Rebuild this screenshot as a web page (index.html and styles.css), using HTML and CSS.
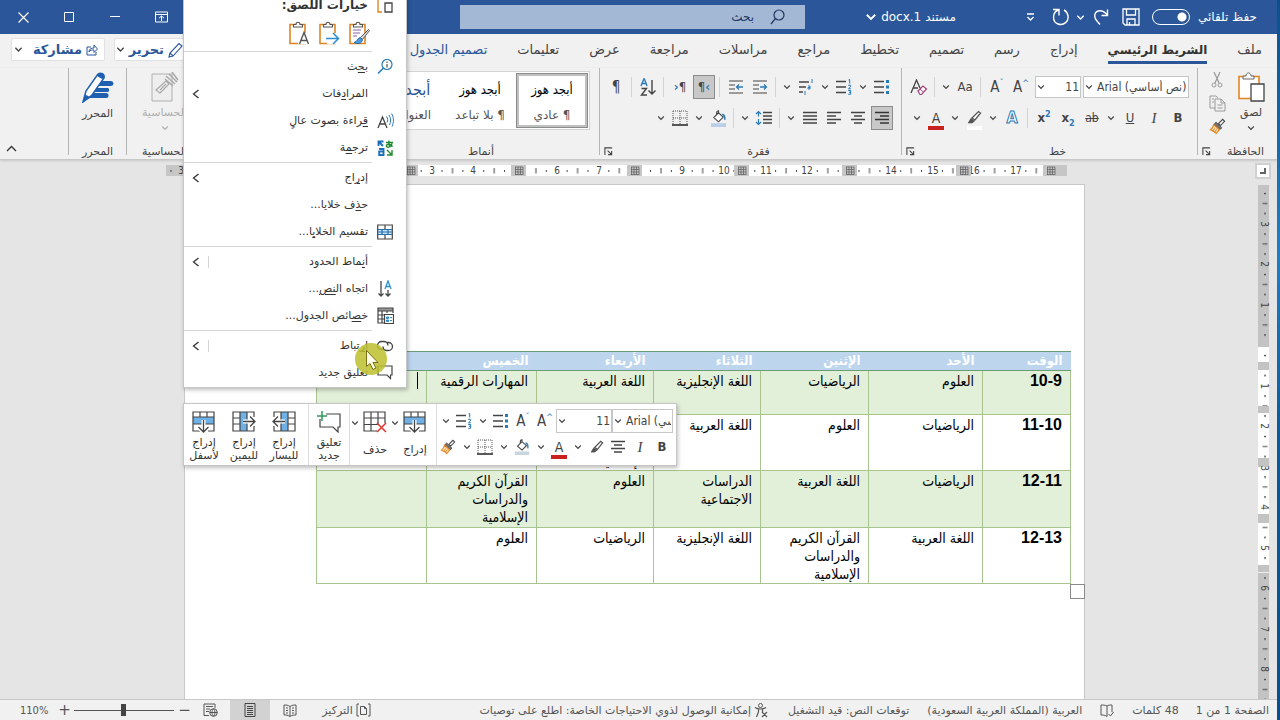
FILE: index.html
```html
<!DOCTYPE html>
<html lang="ar" dir="rtl">
<head>
<meta charset="utf-8">
<title>مستند 1.docx</title>
<link rel="stylesheet" href="styles.css">
</head>
<body>
<svg class="sprite" aria-hidden="true">
  <symbol id="chev" viewBox="0 0 8 8"><path d="M1.200 2.500 4 5.300 6.800 2.500" fill="none" stroke="currentColor" stroke-width="1.200"/></symbol>
  <symbol id="larr" viewBox="0 0 8 10"><path d="M6.500 1 1.500 5 6.500 9" fill="none" stroke="currentColor" stroke-width="1.300"/></symbol>
  <symbol id="launch" viewBox="0 0 10 10"><path d="M1 9V1h8M4 4l4 4M8.500 4.500v4h-4" fill="none" stroke="#444" stroke-width="1.200"/></symbol>
  <symbol id="bullets" viewBox="0 0 18 16"><path d="M1 2.500h10M1 8h10M1 13.500h10" stroke="#444" stroke-width="1.300"/><path d="M13 1h3v3h-3zM13 6.500h3v3h-3zM13 12h3v3h-3z" fill="#2b7bb9"/></symbol>
  <symbol id="numbering" viewBox="0 0 18 16"><path d="M1 2.500h10M1 8h10M1 13.500h10" stroke="#444" stroke-width="1.300"/><path d="M13.500 1l1.200-.6V4.500M13.200 6.300h2.400v1.500l-2.200 2h2.500M13.200 11.500h2.500v1.800h-1.500 1.500v2h-2.500" fill="none" stroke="#2b7bb9"/></symbol>
  <symbol id="lines-r" viewBox="0 0 16 16"><path d="M1 2.500h14M6 6h9M1 9.500h14M6 13h9" stroke="#333" stroke-width="1.300"/></symbol>
  <symbol id="lines-c" viewBox="0 0 16 16"><path d="M1 2.500h14M4 6h8M1 9.500h14M4 13h8" stroke="#444" stroke-width="1.300"/></symbol>
  <symbol id="lines-l" viewBox="0 0 16 16"><path d="M1 2.500h14M1 6h9M1 9.500h14M1 13h9" stroke="#444" stroke-width="1.300"/></symbol>
  <symbol id="lines-j" viewBox="0 0 16 16"><path d="M1 2.500h14M1 6h14M1 9.500h14M1 13h14" stroke="#444" stroke-width="1.300"/></symbol>
  <symbol id="bucket" viewBox="0 0 18 18"><path d="M4 8l5-5 5 4.500-5 5zM9 3V.8c-2 0-2 2-2 4" fill="#fff" stroke="#444" stroke-width="1.200"/><path d="M13 4.500c2.500.5 3 3 2.500 6" fill="none" stroke="#2b7bb9" stroke-width="1.500"/><path class="swatch" d="M1 14h16v4H1z"/></symbol>
  <symbol id="borders" viewBox="0 0 16 16"><path d="M1 1h14M1 8h14M1 1v14M8 1v14M15 1v14" fill="none" stroke="#555" stroke-dasharray="1 1"/><path d="M0 15h16" stroke="#222" stroke-width="1.500"/></symbol>
  <symbol id="pen" viewBox="0 0 16 16"><path d="M6 8l6.500-6.500 2 1.500L9 10zM5 9l3 2-2 1.500H3z" fill="#fff" stroke="#555" stroke-width="1.300"/><path d="M5 9l3 2-2 2H2z" fill="#555"/></symbol>
  <symbol id="brush" viewBox="0 0 18 18"><path d="M10 6l4.500-4.500 2 2L12 8z" fill="#fff" stroke="#444" stroke-width="1.200"/><path d="M7.500 4.500l6 6-2 1.500-6-5.500z" fill="#777" stroke="#444"/><path d="M5 7l6 5.500-3.500 4C6 14 4 13.500 1.500 12.500 3.500 11 4.500 10 5 7z" fill="#fbd9a8" stroke="#e08522" stroke-width="1.200"/><path d="M4 14l2-3M6 15l2-3" stroke="#e08522"/></symbol>
  <symbol id="tbl-down" viewBox="0 0 24 22"><path d="M1 1h21v19H1z" fill="#fff"/><path d="M1 6h21v7H1z" fill="#6fb1e6"/><path d="M8 20H1V1h21v19h-6M1 6h21M1 13h21M8 1v5M15 1v5" fill="none" stroke="#444" stroke-width="1.200"/><path d="M11.500 9v12M6.500 16l5 5 5-5" fill="none" stroke="#fff" stroke-width="4"/><path d="M11.500 9v12M6.500 16l5 5 5-5" fill="none" stroke="#444" stroke-width="1.300"/></symbol>
  <symbol id="tbl-right" viewBox="0 0 24 22"><path d="M1 1h21v19H1z" fill="#fff"/><path d="M8 1h7v19H8z" fill="#6fb1e6"/><path d="M22 6V1H1v19h21v-5M8 1v19M15 1v19M1 7h7M1 13h7" fill="none" stroke="#444" stroke-width="1.200"/><path d="M11 10.500h12M18 5.500l5 5-5 5" fill="none" stroke="#fff" stroke-width="4"/><path d="M11 10.500h12M18 5.500l5 5-5 5" fill="none" stroke="#444" stroke-width="1.300"/></symbol>
  <symbol id="tbl-left" viewBox="0 0 24 22"><path d="M2 1h21v19H2z" fill="#fff"/><path d="M9 1h7v19H9z" fill="#6fb1e6"/><path d="M2 6V1h21v19H2v-5M9 1v19M16 1v19M16 7h7M16 13h7" fill="none" stroke="#444" stroke-width="1.200"/><path d="M13 10.500H1M6 5.500l-5 5 5 5" fill="none" stroke="#fff" stroke-width="4"/><path d="M13 10.500H1M6 5.500l-5 5 5 5" fill="none" stroke="#444" stroke-width="1.300"/></symbol>
  <symbol id="tbl-del" viewBox="0 0 24 22"><path d="M14 20H1V1h21v11M1 7h21M1 13.500h14M8 1v19M15 1v12" fill="#fff" stroke="#444" stroke-width="1.200"/><path d="M14 12l9 9M23 12l-9 9" stroke="#e0352b" stroke-width="1.500"/></symbol>
  <symbol id="comment-new" viewBox="0 0 24 22"><path d="M9 3h14v13h-2v5l-5-5H3V8" fill="#fff" stroke="#444" stroke-width="1.200"/><path d="M5 0v10M0 5h10" stroke="#2e9c57" stroke-width="1.500"/></symbol>
  <symbol id="clip" viewBox="0 0 20 24"><path d="M2 3.500h15v19H2z" fill="#fff" stroke="#e08522" stroke-width="1.600"/><path d="M5.500 6V3.500H8c0-3 4-3 4 0h2.500V6z" fill="#fff" stroke="#555" stroke-width="1.100"/></symbol>
</svg>

<div class="app">
  <header class="titlebar">
    <div class="quick">
      <label class="autosave"><span>حفظ تلقائي</span><input type="checkbox" role="switch"></label>
      <button class="tb" aria-label="حفظ"><svg width="18" height="18" viewBox="0 0 18 18"><path d="M1 1h16v16H3l-2-2zM4.500 1v6h9V1M5 17v-6h8v6M7.500 17v-3" fill="none" stroke="currentColor" stroke-width="1.300"/></svg></button>
      <button class="tb" aria-label="تراجع"><svg width="18" height="18" viewBox="0 0 18 18"><path d="M15.500 1.500v6h-6M15 7C12 2 5 1 3 6c-1.500 4.500 2 7 5 10.500" fill="none" stroke="currentColor" stroke-width="1.400"/></svg></button>
      <button class="tb narrow" aria-label="خيارات التراجع"><svg width="9" height="9"><use href="#chev"/></svg></button>
      <button class="tb" aria-label="إعادة"><svg width="18" height="18" viewBox="0 0 18 18"><path d="M1 1.500h6v6M6.500 2C0 4 0 14 6 16c6 2 11-3 10-8-.5-3-2-5-4-6" fill="none" stroke="currentColor" stroke-width="1.400"/></svg></button>
      <button class="tb" aria-label="تخصيص"><svg width="9" height="9" viewBox="0 0 9 9"><path d="M1 1h7M1.500 4l3 3 3-3" fill="none" stroke="currentColor" stroke-width="1.300"/></svg></button>
    </div>
    <button class="doc-title">مستند <bdi dir="ltr">docx.1</bdi><svg width="12" height="12"><use href="#chev"/></svg></button>
    <label class="search"><svg width="15" height="16" viewBox="0 0 15 16"><circle cx="9" cy="6" r="5" fill="none" stroke="#1f3864" stroke-width="1.200"/><path d="M5.500 9.500 1 15" stroke="#1f3864" stroke-width="1.200"/></svg><input type="text" placeholder="بحث" aria-label="بحث"></label>
    <div class="window">
      <button class="win" aria-label="خيارات عرض الشريط"><svg width="13" height="12" viewBox="0 0 13 12"><path d="M.5 1h12v10H.5zM.5 3.500h12M6.500 10V5M4 7.200 6.500 5 9 7.200" fill="none" stroke="currentColor"/></svg></button>
      <button class="win" aria-label="تصغير"><svg width="10" height="10"><path d="M0 4.500h10" stroke="currentColor"/></svg></button>
      <button class="win" aria-label="تكبير"><svg width="10" height="10"><path d="M.5.5h9v9h-9z" fill="none" stroke="currentColor"/></svg></button>
      <button class="win" aria-label="إغلاق"><svg width="11" height="11"><path d="M.5.5l10 10M10.500.5l-10 10" stroke="currentColor" stroke-width="1.200"/></svg></button>
    </div>
  </header>

  <nav class="tabs">
    <a href="#">ملف</a><a href="#" class="current">الشريط الرئيسي</a><a href="#">إدراج</a><a href="#">رسم</a><a href="#">تصميم</a><a href="#">تخطيط</a><a href="#">مراجع</a><a href="#">مراسلات</a><a href="#">مراجعة</a><a href="#">عرض</a><a href="#">تعليمات</a><a href="#" class="tool-tab">تصميم الجدول</a>
    <div class="tab-actions">
      <button class="pill"><svg width="15" height="16" viewBox="0 0 15 16"><path d="M1 15l1-4L11 1.500l3 2.500-9 10zM2 11l3 3" fill="#fff" stroke="#2b579a" stroke-width="1.100"/></svg>تحرير<svg class="end" width="9" height="9"><use href="#chev"/></svg></button>
      <button class="pill share"><svg width="12" height="12" viewBox="0 0 12 12"><path d="M5 3H1v8h9V8M3 8c0-3 2-4 5-4V1l3.500 4L8 8.500V6C6 6 4 6 3 8z" fill="none" stroke="#2b579a"/></svg>مشاركة<svg class="end" width="9" height="9"><use href="#chev"/></svg></button>
    </div>
  </nav>

  <section class="ribbon">
    <div class="group clipboard">
      <div class="group-body">
        <button class="big"><svg width="28" height="30" viewBox="0 0 28 30"><path d="M2 4.500h20v22H2z" fill="#fff" stroke="#e08522" stroke-width="1.600"/><path d="M6 7V4h3c0-4 5-4 5 0h3v3z" fill="#fff" stroke="#666"/><path d="M14 12h13v17H14z" fill="#fff" stroke="#444" stroke-width="1.300"/></svg><span>لصق</span><svg width="8" height="8"><use href="#chev"/></svg></button>
        <div class="stack">
          <button class="ic" aria-label="قص"><svg width="12" height="16" viewBox="0 0 12 16"><path d="M3 0l5 11M9 0L4 11" stroke="#999" stroke-width="1.200"/><circle cx="3" cy="13" r="2" fill="none" stroke="#999"/><circle cx="9" cy="13" r="2" fill="none" stroke="#999"/></svg></button>
          <button class="ic" aria-label="نسخ"><svg width="17" height="17" viewBox="0 0 17 17"><path d="M6 13H1V1h6l2 2M6 4h6l4 4v8H6zM12 4v4h4M8.500 10h5M8.500 13h5M3 4h2M3 7h2" fill="none" stroke="#999"/></svg></button>
          <button class="ic" aria-label="نسخ التنسيق"><svg width="17" height="17"><use href="#brush"/></svg></button>
        </div>
      </div>
      <div class="group-label"><span>الحافظة</span><button class="launcher" aria-label="مزيد"><svg width="9" height="9"><use href="#launch"/></svg></button></div>
    </div>

    <div class="group font">
      <div class="group-body rows">
        <div class="row">
          <div class="combo family"><input dir="ltr" value="Arial (نص أساسي)" aria-label="الخط"><button aria-label="قائمة الخطوط"><svg width="8" height="8"><use href="#chev"/></svg></button></div>
          <div class="combo size"><input dir="ltr" value="11" aria-label="الحجم"><button aria-label="قائمة الأحجام"><svg width="8" height="8"><use href="#chev"/></svg></button></div>
          <button class="ic glyph" dir="ltr" aria-label="تكبير الخط">A<sup>^</sup></button>
          <button class="ic glyph" dir="ltr" aria-label="تصغير الخط">A<sup>ˇ</sup></button>
          <i class="bar"></i>
          <button class="ic glyph small">Aa</button><button class="dd" aria-label="حالة الأحرف"><svg width="8" height="8"><use href="#chev"/></svg></button>
          <i class="bar"></i>
          <button class="ic" aria-label="مسح التنسيق"><svg width="18" height="17" viewBox="0 0 18 17"><path d="M1 14L6.500 1 10 9M3 9h5" fill="none" stroke="#444" stroke-width="1.300"/><path d="M8 12l5-5 3.500 3-5 5.500H10z" fill="#fff" stroke="#a1427a" stroke-width="1.200"/><path d="M10 10l3.500 3" stroke="#a1427a"/></svg></button>
        </div>
        <div class="row">
          <button class="ic glyph b">B</button><button class="ic glyph it">I</button><button class="ic glyph un">U</button><button class="dd" aria-label="أنماط التسطير"><svg width="8" height="8"><use href="#chev"/></svg></button>
          <button class="ic glyph st">ab</button>
          <button class="ic glyph b xs" dir="ltr">x<sub>2</sub></button><button class="ic glyph b xs" dir="ltr">x<sup>2</sup></button>
          <i class="bar"></i>
          <button class="ic glyph fx">A</button><button class="dd" aria-label="تأثيرات"><svg width="8" height="8"><use href="#chev"/></svg></button>
          <button class="ic hl" aria-label="تمييز"><svg width="16" height="16"><use href="#pen"/></svg></button><button class="dd" aria-label="ألوان التمييز"><svg width="8" height="8"><use href="#chev"/></svg></button>
          <button class="ic glyph fc">A</button><button class="dd" aria-label="ألوان الخط"><svg width="8" height="8"><use href="#chev"/></svg></button>
        </div>
      </div>
      <div class="group-label"><span>خط</span><button class="launcher" aria-label="مزيد"><svg width="9" height="9"><use href="#launch"/></svg></button></div>
    </div>

    <div class="group para">
      <div class="group-body rows">
        <div class="row">
          <button class="ic" aria-label="تعداد نقطي"><svg width="18" height="16"><use href="#bullets"/></svg></button><button class="dd" aria-label="نقاط"><svg width="8" height="8"><use href="#chev"/></svg></button>
          <button class="ic" aria-label="تعداد رقمي"><svg width="18" height="16"><use href="#numbering"/></svg></button><button class="dd" aria-label="أرقام"><svg width="8" height="8"><use href="#chev"/></svg></button>
          <button class="ic" aria-label="قائمة متعددة"><svg width="16" height="16" viewBox="0 0 16 16"><path d="M1 3h10M1 8h7M1 13h4" stroke="#444" stroke-width="1.300"/><path d="M14 0v4M10 7h2v3h-2V8.500h2M7 12v4" fill="none" stroke="#2b7bb9"/></svg></button><button class="dd" aria-label="مستويات"><svg width="8" height="8"><use href="#chev"/></svg></button>
          <i class="bar"></i>
          <button class="ic" aria-label="إنقاص المسافة"><svg width="16" height="14" viewBox="0 0 16 14"><path d="M1 1h14M1 5h6M1 9h6M1 13h14" stroke="#444" stroke-width="1.200"/><path d="M8 7h6M12 4.500 14.500 7 12 9.500" fill="none" stroke="#2b7bb9" stroke-width="1.300"/></svg></button>
          <button class="ic" aria-label="زيادة المسافة"><svg width="16" height="14" viewBox="0 0 16 14"><path d="M1 1h14M1 5h6M1 9h6M1 13h14" stroke="#444" stroke-width="1.200"/><path d="M15 7H9M11 4.500 8.500 7 11 9.500" fill="none" stroke="#2b7bb9" stroke-width="1.300"/></svg></button>
          <i class="bar"></i>
          <button class="ic glyph pil on" dir="ltr">¶<em>‹</em></button>
          <button class="ic glyph pil" dir="ltr"><em>›</em>¶</button>
          <i class="bar"></i>
          <button class="ic" aria-label="فرز"><svg width="18" height="18" viewBox="0 0 18 18"><path d="M2 8l2.800-7h.6L8 8M3 5.500h4" fill="none" stroke="#2b7bb9" stroke-width="1.400"/><path d="M2.500 10.500h5L2.500 17h5.500M13 2v14M9.500 12.500 13 16l3.500-3.500" fill="none" stroke="#444" stroke-width="1.400"/></svg></button>
          <i class="bar"></i>
          <button class="ic glyph">¶</button>
        </div>
        <div class="row">
          <button class="ic on" aria-label="محاذاة لليمين"><svg width="16" height="16"><use href="#lines-r"/></svg></button>
          <button class="ic" aria-label="توسيط"><svg width="16" height="16"><use href="#lines-c"/></svg></button>
          <button class="ic" aria-label="محاذاة لليسار"><svg width="16" height="16"><use href="#lines-l"/></svg></button>
          <button class="ic" aria-label="ضبط"><svg width="16" height="16"><use href="#lines-j"/></svg></button><button class="dd" aria-label="خيارات الضبط"><svg width="8" height="8"><use href="#chev"/></svg></button>
          <i class="bar"></i>
          <button class="ic" aria-label="تباعد الأسطر"><svg width="18" height="16" viewBox="0 0 18 16"><path d="M8 2.500h9M8 6h9M8 9.500h9M8 13h9" stroke="#444" stroke-width="1.300"/><path d="M3.500 1.500v5M1 4l2.500-2.500L6 4M3.500 9v5.500M1 12l2.500 2.500L6 12" fill="none" stroke="#2b7bb9" stroke-width="1.200"/></svg></button><button class="dd" aria-label="خيارات التباعد"><svg width="8" height="8"><use href="#chev"/></svg></button>
          <i class="bar"></i>
          <button class="ic shade" aria-label="تظليل"><svg width="17" height="17"><use href="#bucket"/></svg></button><button class="dd" aria-label="ألوان التظليل"><svg width="8" height="8"><use href="#chev"/></svg></button>
          <button class="ic" aria-label="حدود"><svg width="16" height="16"><use href="#borders"/></svg></button><button class="dd" aria-label="أنواع الحدود"><svg width="8" height="8"><use href="#chev"/></svg></button>
        </div>
      </div>
      <div class="group-label"><span>فقرة</span><button class="launcher" aria-label="مزيد"><svg width="9" height="9"><use href="#launch"/></svg></button></div>
    </div>

    <div class="group styles">
      <div class="gallery">
        <button class="card picked"><span class="sample">أبجد هوز</span><span>¶ عادي</span></button>
        <button class="card"><span class="sample">أبجد هوز</span><span>¶ بلا تباعد</span></button>
        <button class="card"><span class="sample heading">أبجد هو</span><span>العنوان 1</span></button>
      </div>
      <div class="group-label"><span>أنماط</span></div>
    </div>

    <div class="group filler"></div>

    <div class="group sens">
      <div class="group-body">
        <button class="big faded"><svg width="28" height="30" viewBox="0 0 28 30"><path d="M1 2h20v27H1z" fill="#eee" stroke="#b0b0b0"/><path d="M5 18L15 9l3 3-9 9zM9 18l6-6" fill="#f1f1f1" stroke="#a8a8a8" stroke-width="1.200"/><path d="M15 4l9 8M18 2l8 8M21 0l6 8M14 7l8 7" stroke="#a8a8a8" stroke-width="1.500"/></svg><span>الحساسية</span><svg width="8" height="8"><use href="#chev"/></svg></button>
      </div>
      <div class="group-label"><span>الحساسية</span></div>
    </div>
    <div class="group editor">
      <div class="group-body">
        <button class="big"><svg width="32" height="31" viewBox="0 0 32 31"><path d="M17 9h12a2.300 2.300 0 010 5H14l-6 7h16a2.300 2.300 0 010 5H3" fill="#1f5fb0"/><path d="M14 15.500h15M10 20h16" stroke="#f1f1f1" stroke-width="1.500"/><path d="M12 16h14a2.300 2.300 0 010 4H8z" fill="#1f5fb0"/><path d="M1 30l3-11L16 2c3-2 7 0 6 4L10 23z" fill="#fff" stroke="#1f5fb0" stroke-width="1.500"/><path d="M1 30l2-7c2 0 4 1 5 3z" fill="#1f5fb0"/><path d="M16 2c3-2 7 0 6 4l-2 1-5-3z" fill="#1f5fb0"/></svg><span>المحرر</span></button>
      </div>
      <div class="group-label"><span>المحرر</span></div>
    </div>
    <div class="ribbon-end"><button class="collapse" aria-label="طي الشريط"><svg width="11" height="7"><path d="M1 6l4.500-4.500L10 6" fill="none" stroke="#333" stroke-width="1.300"/></svg></button></div>
  </section>

  <main class="workspace">
    <aside class="vruler">
      <div class="corner"><svg width="6" height="6"><path d="M5 0v5H0" fill="none" stroke="#666" stroke-width="2"/></svg></div>
      <svg class="vscale" width="12" height="520" direction="ltr">
        <defs><pattern id="vt" y="0" x="0" width="12" height="40.500" patternUnits="userSpaceOnUse" patternTransform="translate(0 -2)"><path d="M6 10.500h2M4.500 20.500h5M6 30.500h2" stroke="#444"/></pattern></defs>
        <path d="M0 0h11v520H0z" fill="#c3c3c3"/>
        <path d="M0 162h11v15H0zM0 185h11v36H0zM0 228h11v45H0zM0 282h11v47H0zM0 338h11v42H0z" fill="#fff"/>
        <path d="M0 387.500h11" stroke="#eee"/>
        <path d="M0 0h12v520H0z" fill="url(#vt)"/>
        <g class="num"><text transform="translate(3 39) rotate(90)">3</text><text transform="translate(3 79) rotate(90)">2</text><text transform="translate(3 120) rotate(90)">1</text><text transform="translate(3 201) rotate(90)">1</text><text transform="translate(3 241) rotate(90)">2</text><text transform="translate(3 283) rotate(90)">3</text><text transform="translate(3 322) rotate(90)">4</text><text transform="translate(3 363) rotate(90)">5</text><text transform="translate(3 403) rotate(90)">6</text><text transform="translate(3 444) rotate(90)">7</text><text transform="translate(3 484) rotate(90)">8</text></g>
        <path d="M0 177h11v8H0zM0 221h11v7H0zM0 273h11v8H0zM0 330h11v7H0zM0 380h11v7H0z" fill="#c3c3c3"/>
      </svg>
    </aside>

    <div class="canvas">
      <svg class="hruler" width="901" height="11" direction="ltr">
        <defs>
          <pattern id="ht" width="41.700" height="11" patternUnits="userSpaceOnUse" patternTransform="translate(15.400 0)"><path d="M10.400 5v2M20.900 3v5.500M31.300 5v2" stroke="#444"/></pattern>
          <symbol id="mk" viewBox="0 0 15 11"><path d="M0 0h15v11H0z" fill="#c6c6c6"/><path d="M4 2h8M4 4.500h8M4 7h8M4 9.500h8M4.500 2v8M7 2v8M9.500 2v8M12 2v8" stroke="#666" stroke-width=".8"/></symbol>
        </defs>
        <path d="M0 0h901v11H0z" fill="#fff"/><path d="M0 0h18v11H0zM884 0h17v11H884z" fill="#c6c6c6"/>
        <path d="M0 0h880v11H0z" fill="url(#ht)"/>
        <g class="num"><text x="15" y="9">3</text><text x="266" y="9">3</text><text x="307" y="9">4</text><text x="391" y="9">6</text><text x="433" y="9">7</text><text x="516" y="9">9</text><text x="558" y="9">10</text><text x="600" y="9">11</text><text x="641" y="9">12</text><text x="725" y="9">14</text><text x="767" y="9">15</text><text x="808" y="9">16</text><text x="850" y="9">17</text></g>
        <use href="#mk" x="237" width="15" height="11"/><use href="#mk" x="345" width="15" height="11"/><use href="#mk" x="461" width="15" height="11"/><use href="#mk" x="568" width="15" height="11"/><use href="#mk" x="676" width="15" height="11"/><use href="#mk" x="790" width="15" height="11"/><use href="#mk" x="877" width="15" height="11"/>
      </svg>
      <article class="page">
        <div class="table-wrap">
          <table class="schedule">
            <colgroup><col class="c-time"><col class="c-d1"><col class="c-d2"><col class="c-d3"><col class="c-d4"><col class="c-d5"><col class="c-d6"></colgroup>
            <thead><tr><th>الوقت</th><th>الأحد</th><th>الإثنين</th><th>الثلاثاء</th><th>الأربعاء</th><th>الخميس</th><th></th></tr></thead>
            <tbody>
              <tr class="tinted short"><th><bdi dir="ltr">10-9</bdi></th><td>العلوم</td><td>الرياضيات</td><td>اللغة الإنجليزية</td><td>اللغة العربية</td><td>المهارات الرقمية</td><td><i class="caret"></i></td></tr>
              <tr class="mid"><th><bdi dir="ltr">11-10</bdi></th><td>الرياضيات</td><td>العلوم</td><td>اللغة العربية</td><td>القرآن الكريم<br>والدراسات<br>الإسلامية</td><td></td><td></td></tr>
              <tr class="tinted"><th><bdi dir="ltr">12-11</bdi></th><td>الرياضيات</td><td>اللغة العربية</td><td>الدراسات<br>الاجتماعية</td><td>العلوم</td><td>القرآن الكريم<br>والدراسات<br>الإسلامية</td><td></td></tr>
              <tr class="mid"><th><bdi dir="ltr">12-13</bdi></th><td>اللغة العربية</td><td>القرآن الكريم<br>والدراسات<br>الإسلامية</td><td>اللغة الإنجليزية</td><td>الرياضيات</td><td>العلوم</td><td></td></tr>
            </tbody>
          </table>
          <span class="resize"></span>
        </div>
      </article>
    </div>
  </main>

  <footer class="status">
    <span>الصفحة 1 من 1</span>
    <span class="words">48 كلمات</span>
    <svg class="book" width="14" height="13" viewBox="0 0 14 13"><path d="M7 2C5 1 3 1 1 1v10c2 0 4 0 6 1.500V2c1-1 3-1 5-1v7M8.500 10l2 2 3-4" fill="none" stroke="#555"/></svg>
    <span class="lang">العربية (المملكة العربية السعودية)</span>
    <span class="predict">توقعات النص: قيد التشغيل</span>
    <span class="access"><svg width="14" height="15" viewBox="0 0 14 15"><circle cx="6.500" cy="2.500" r="2" fill="none" stroke="#555"/><path d="M1 4.500c3 2 8 2 11 0M4.500 6v3L2.500 14M8.500 6v3M8 9l5 5M13 9l-5 5" fill="none" stroke="#555" stroke-width="1.200"/></svg>إمكانية الوصول لذوي الاحتياجات الخاصة: اطلع على توصيات</span>
    <div class="views">
      <button class="focus"><svg width="15" height="14" viewBox="0 0 15 14"><path d="M3 1H1v12h2M12 1h2v12h-2M4.500 3.500h4l2 2v6h-6zM8.500 3.500v2h2" fill="none" stroke="#555"/></svg>التركيز</button>
      <button class="view" aria-label="وضع القراءة"><svg width="14" height="13" viewBox="0 0 14 13"><path d="M7 2.500C5 1 3 1 1 1v10c2 0 4 0 6 1.500C9 11 11 11 13 11V1c-2 0-4 0-6 1.500v10M3 4h2M3 6.500h2M3 9h2M9 4h2M9 6.500h2M9 9h2" fill="none" stroke="#555"/></svg></button>
      <button class="view on" aria-label="تخطيط الطباعة"><svg width="12" height="14" viewBox="0 0 12 14"><path d="M1 .5h10v13H1zM3 3.500h6M3 5.500h6M3 7.500h6M3 9.500h6M3 11.500h6" fill="none" stroke="#444"/></svg></button>
      <button class="view" aria-label="تخطيط ويب"><svg width="15" height="14" viewBox="0 0 15 14"><path d="M6 12.500H1V1h11v4M3 3.500h7M3 6h4M3 8.500h3" fill="none" stroke="#555"/><circle cx="10.500" cy="9.500" r="3.800" fill="#f1f1f1" stroke="#555"/><path d="M6.700 9.500h7.600M10.500 5.700c-2 2-2 5.600 0 7.600 2-2 2-5.600 0-7.600" fill="none" stroke="#555"/></svg></button>
      <div class="zoom" dir="ltr"><output>110%</output><button aria-label="تكبير">+</button><input type="range" min="0" max="100" value="49" aria-label="تكبير/تصغير"><button aria-label="تصغير">−</button></div>
    </div>
  </footer>

  <div class="menu" role="menu">
    <div class="menu-head"><span class="mi-ic"><svg width="16" height="18" viewBox="0 0 16 18"><path d="M5 16H1V1h13v2" fill="none" stroke="#e08522" stroke-width="1.400"/><path d="M8 7h7v9H8z" fill="#fff" stroke="#444" stroke-width="1.300"/></svg></span>خيارات اللصق:</div>
    <div class="paste">
      <button aria-label="الاحتفاظ بالتنسيق"><svg width="22" height="24" viewBox="0 0 22 24"><use href="#clip" width="20" height="24"/><path d="M5 9h8M5 12h7M5 15h4" stroke="#8a5fa8"/><path d="M20.500 8.500l-8 8 2 2 7-9z" fill="#ddd" stroke="#555"/><path d="M12 16.500c-3 1-2 4-6 5 4 2 8 1 8.500-3z" fill="#4a9be0" stroke="#2b6cb0"/></svg></button>
      <button aria-label="دمج التنسيق"><svg width="22" height="24" viewBox="0 0 22 24"><use href="#clip" width="20" height="24"/><path d="M9 12h12v11H9z" fill="#fff"/><path d="M8 17.500h12.500M15 12l5.500 5.500L15 23" fill="none" stroke="#2b8fd0" stroke-width="1.500"/></svg></button>
      <button aria-label="النص فقط"><svg width="22" height="24" viewBox="0 0 22 24"><use href="#clip" width="20" height="24"/><path d="M11 12h10v11H10z" fill="#fff"/><path d="M11.500 23 16 11.500 20.500 23M13 19.500h6" fill="none" stroke="#555" stroke-width="1.400"/></svg></button>
    </div>
    <hr>
    <button class="mi" role="menuitem"><span class="mi-ic"><svg width="16" height="16" viewBox="0 0 16 16"><circle cx="10" cy="5.500" r="5" fill="#fff" stroke="#2b7bb9" stroke-width="1.200"/><path d="M6.500 9 1 14.500" stroke="#2b7bb9" stroke-width="1.600"/><path d="M10 5v3.500M10 2.500V4" stroke="#333"/></svg></span><span>ب<u>ح</u>ث</span></button>
    <button class="mi" role="menuitem"><span class="mi-ic"></span><span>المرا<u>د</u>فات</span><svg class="sub" width="8" height="10"><use href="#larr"/></svg></button>
    <button class="mi" role="menuitem"><span class="mi-ic"><svg width="17" height="16" viewBox="0 0 17 16"><path d="M1 15 5.500 4 10 15M2.500 11h6" fill="none" stroke="#444" stroke-width="1.300"/><path d="M9.500 3.500c1.500 2 1.500 4 .5 6M12 2c2 3 2 7 .5 10M14.500.5c2.500 4 2.500 9 .5 13" fill="none" stroke="#2b7bb9"/></svg></span><span><u>ق</u>راءة بصوت عالٍ</span></button>
    <button class="mi" role="menuitem"><span class="mi-ic"><svg width="17" height="16" viewBox="0 0 17 16"><path d="M1.500 6V1.500h5M1.500 1.500 6 6M2 9h4.500v6H2.200v-3.500h4" fill="none" stroke="#1c6fb8" stroke-width="1.900"/><path d="M9 2.500h7M12 .5c-.5 3 0 5 1 7M15 3.500c-1 4-6 5-5.500 2 .5-2 6-1.500 5.500 1.500M15 10v5h-5M10 10l5 5" fill="none" stroke="#1f8a2d" stroke-width="1.400"/></svg></span><span>ترج<u>م</u>ة</span></button>
    <hr>
    <button class="mi" role="menuitem"><span class="mi-ic"></span><span>إد<u>ر</u>اج</span><svg class="sub" width="8" height="10"><use href="#larr"/></svg></button>
    <button class="mi" role="menuitem"><span class="mi-ic"></span><span>ح<u>ذ</u>ف خلايا...</span></button>
    <button class="mi" role="menuitem"><span class="mi-ic"><svg width="16" height="16" viewBox="0 0 16 16"><path d="M1 5.500h14v5H1z" fill="#cfe6f8"/><path d="M.7 1h14.600v14H.7zM8 1v4.500M8 10.500V15" fill="none" stroke="#444" stroke-width="1.200"/><path d="M1 5.500h14M1 10.500h14M5 5.500v5M11 5.500v5M1 8h14" fill="none" stroke="#1f6fae" stroke-width="1.200"/></svg></span><span>تقسيم الخلا<u>ي</u>ا...</span></button>
    <hr>
    <button class="mi" role="menuitem"><span class="mi-ic"></span><span>أ<u>ن</u>ماط الحدود</span><i class="split"></i><svg class="sub" width="8" height="10"><use href="#larr"/></svg></button>
    <button class="mi" role="menuitem"><span class="mi-ic"><svg width="16" height="18" viewBox="0 0 16 18"><path d="M4 1v15M1.500 13.500 4 16l2.500-2.500M11 10v6M8.500 13.500 11 16l2.500-2.500" fill="none" stroke="#444" stroke-width="1.300"/><path d="M8 9l3-8 3 8M9 6.500h4" fill="none" stroke="#2b8fd0" stroke-width="1.300"/></svg></span><span>اتجاه ال<u>نص</u>...</span></button>
    <button class="mi" role="menuitem"><span class="mi-ic"><svg width="17" height="17" viewBox="0 0 17 17"><path d="M1 1h15v3H1z" fill="#999"/><path d="M7 16H1V1h15v5M1 4h15M1 8h6M1 12h6M5 4v12M10 4v2" fill="none" stroke="#444" stroke-width="1.200"/><path d="M7.500 7.500h9v9h-9z" fill="#fff" stroke="#444" stroke-width="1.200"/><path d="M9.500 10h2v1.500h-2zM9.500 13h2v1.500h-2zM13 10.500h2M13 13.500h2" fill="#2b8fd0" stroke="#2b8fd0"/></svg></span><span>خ<u>ص</u>ائص الجدول...</span></button>
    <hr>
    <button class="mi" role="menuitem"><span class="mi-ic"><svg width="18" height="12" viewBox="0 0 18 12"><path d="M8 9.500H5.500a4 4 0 010-8H8a4 4 0 014 4M10 2.500h2.500a4 4 0 010 8H10a4 4 0 01-3-4" fill="none" stroke="#444" stroke-width="1.300"/></svg></span><span>إ<u>ر</u>تباط</span><i class="split"></i><svg class="sub" width="8" height="10"><use href="#larr"/></svg></button>
    <button class="mi" role="menuitem"><span class="mi-ic"><svg width="16" height="15" viewBox="0 0 16 15"><path d="M1 1h14v9h-1.500v3.500L10 10H1z" fill="#fff" stroke="#444" stroke-width="1.200"/></svg></span><span>تعليق جديد</span></button>
  </div>

  <div class="mini" role="toolbar">
    <div class="mini-rows">
      <div class="row">
        <div class="combo family"><input dir="ltr" value="Arial (نص أساسي)" aria-label="خط مصغر"><button aria-label="الخطوط"><svg width="8" height="8"><use href="#chev"/></svg></button></div>
        <div class="combo size"><input dir="ltr" value="11" aria-label="حجم مصغر"><button aria-label="الأحجام"><svg width="8" height="8"><use href="#chev"/></svg></button></div>
        <button class="ic glyph" dir="ltr">A<sup>^</sup></button><button class="ic glyph" dir="ltr">A<sup>ˇ</sup></button>
        <button class="ic" aria-label="نقاط"><svg width="18" height="16"><use href="#bullets"/></svg></button><button class="dd" aria-label="نقاط"><svg width="8" height="8"><use href="#chev"/></svg></button>
        <button class="ic" aria-label="أرقام"><svg width="18" height="16"><use href="#numbering"/></svg></button><button class="dd" aria-label="أرقام"><svg width="8" height="8"><use href="#chev"/></svg></button>
      </div>
      <div class="row">
        <button class="ic glyph b">B</button><button class="ic glyph it">I</button>
        <button class="ic" aria-label="توسيط"><svg width="16" height="16"><use href="#lines-c"/></svg></button>
        <button class="ic" aria-label="تمييز"><svg width="15" height="15"><use href="#pen"/></svg></button><button class="dd" aria-label="تمييز"><svg width="8" height="8"><use href="#chev"/></svg></button>
        <button class="ic glyph fc">A</button><button class="dd" aria-label="ألوان"><svg width="8" height="8"><use href="#chev"/></svg></button>
        <button class="ic shade" aria-label="تظليل"><svg width="16" height="16"><use href="#bucket"/></svg></button><button class="dd" aria-label="تظليل"><svg width="8" height="8"><use href="#chev"/></svg></button>
        <button class="ic" aria-label="حدود"><svg width="16" height="16"><use href="#borders"/></svg></button><button class="dd" aria-label="حدود"><svg width="8" height="8"><use href="#chev"/></svg></button>
        <button class="ic" aria-label="نسخ التنسيق"><svg width="16" height="16"><use href="#brush"/></svg></button>
      </div>
    </div>
    <div class="tiles pair">
      <button class="tile narrow"><svg width="24" height="22"><use href="#tbl-down"/></svg><span>إدراج</span></button><button class="tdd" aria-label="خيارات الإدراج"><svg width="8" height="8"><use href="#chev"/></svg></button>
      <button class="tile narrow"><svg width="24" height="22"><use href="#tbl-del"/></svg><span>حذف</span></button><button class="tdd" aria-label="خيارات الحذف"><svg width="8" height="8"><use href="#chev"/></svg></button>
    </div>
    <div class="tiles"><button class="tile"><svg width="24" height="22"><use href="#comment-new"/></svg><span>تعليق<br>جديد</span></button></div>
    <div class="tiles last">
      <button class="tile"><svg width="24" height="22"><use href="#tbl-left"/></svg><span>إدراج<br>لليسار</span></button>
      <button class="tile"><svg width="24" height="22"><use href="#tbl-right"/></svg><span>إدراج<br>لليمين</span></button>
      <button class="tile"><svg width="24" height="22"><use href="#tbl-down"/></svg><span>إدراج<br>لأسفل</span></button>
    </div>
  </div>

  <svg class="pointer" width="32" height="32" viewBox="0 0 32 32"><circle cx="16" cy="16" r="16" fill="#bcbf2c" fill-opacity=".85"/><path d="M11.500 7.500v16l3.500-3 3 6 3-1.500-3-5.500h5z" fill="#fffce8" stroke="#7a7016"/></svg>
</div>
</body>
</html>
```
FILE: styles.css
```css
* { box-sizing: border-box; }

body {
  margin: 0;
  padding-right: 3px;
  background: linear-gradient(#0c4f8c, #1f7fc4 35%, #0a5a9c 60%, #0a4f8c);
  font-family: "DejaVu Sans", sans-serif;
  font-size: 11px;
  color: #444;
}

button, input { font: inherit; color: inherit; }
button { margin: 0; padding: 0; border: 0; background: none; }
svg { flex: none; }
.sprite { position: absolute; width: 0; height: 0; }

.app {
  position: relative;
  display: flex;
  flex-direction: column;
  height: 100vh;
  overflow: hidden;
  background: #e5e5e5;
}

/* title bar */
.titlebar {
  flex: none;
  display: flex;
  align-items: center;
  height: 34px;
  padding-right: 20px;
  background: #2b579a;
  color: #fff;
}
.quick { display: flex; align-items: center; }
.autosave { display: flex; align-items: center; gap: 8px; margin-left: 6px; font-size: 12px; }
.autosave input {
  appearance: none;
  width: 38px;
  height: 16px;
  margin: 0;
  border: 1px solid #fff;
  border-radius: 8px;
  background: radial-gradient(circle at 29px 7px, #fff 4px, transparent 5px);
}
.tb { display: grid; place-items: center; width: 30px; height: 30px; }
.tb.narrow { width: 10px; }
.doc-title {
  display: flex;
  align-items: center;
  gap: 4px;
  margin-right: 60px;
  font-size: 12px;
}
.search {
  display: flex;
  align-items: center;
  gap: 14px;
  flex: 0 1 345px;
  height: 24px;
  margin-right: 60px;
  padding: 0 20px;
  background: #a3b8d4;
  color: #1f3864;
}
.search input { flex: 1; min-width: 0; border: 0; background: none; outline: 0; font-size: 12px; }
.search input::placeholder { color: #1f3864; opacity: 1; }
.window { display: flex; margin-right: auto; }
.win { display: grid; place-items: center; width: 46px; height: 32px; }

/* tabs */
.tabs {
  flex: none;
  display: flex;
  align-items: center;
  gap: 30px;
  height: 34px;
  padding-right: 15px;
  background: #f1f1f1;
  font-size: 13px;
}
.tabs a { color: #444; text-decoration: none; white-space: nowrap; line-height: 22px; border-bottom: 3px solid transparent; }
.tabs a.current { font-weight: bold; font-size: 12px; color: #333; border-color: #2b579a; }
.tabs a.tool-tab { color: #2b579a; }
.tab-actions { position: absolute; left: 11px; top: 38px; display: flex; gap: 9px; }
.pill {
  display: flex;
  align-items: center;
  gap: 4px;
  height: 23px;
  width: 78px;
  padding: 0 8px 0 4px;
  border: 1px solid #e1e1e1;
  border-radius: 2px;
  background: #fff;
  color: #2b579a;
  font-size: 13px;
  font-weight: bold;
}
.pill.share { width: 94px; padding: 0 6px 0 2px; }
.pill .end { margin-right: auto; color: #444; }

/* ribbon */
.ribbon {
  flex: none;
  display: flex;
  align-items: stretch;
  height: 92px;
  background: #f1f1f1;
  border-bottom: 1px solid #c8c8c8;
  box-shadow: 0 1px 2px #c8c8c8;
}
.group { flex: none; display: flex; flex-direction: column; border-left: 1px solid #b5b5b5; margin-bottom: 4px; }
.clipboard { width: 80px; }
.font { width: 296px; }
.para { width: 302px; }
.styles { width: 236px; border-left: 0; }
.filler { flex: 1; }
.sens { width: 76px; }
.editor { width: 58px; }
.group-body { flex: 1; display: flex; }
.group-label { display: flex; align-items: center; justify-content: center; height: 16px; margin-bottom: -4px; }
.group-label span { flex: 1; text-align: center; }
.launcher { width: 16px; height: 14px; display: grid; place-items: center; }
.rows { flex-direction: column; gap: 7px; padding: 7px 7px 0 0; }
.row { display: flex; align-items: center; height: 24px; }
.big { display: flex; flex-direction: column; align-items: center; gap: 3px; width: 44px; padding-top: 4px; }
.big span { line-height: 16px; }
.clipboard .group-body { padding-right: 4px; }
.stack { display: flex; flex-direction: column; gap: 1px; padding-top: 1px; }
.stack .ic { height: 22px; }
.sens .big, .editor .big { width: 100%; }
.faded { color: #b0b0b0; }
.ribbon-end { display: flex; align-items: flex-end; justify-content: flex-end; width: 68px; }
.collapse { padding: 0 6px 4px; }

.ic { display: grid; place-items: center; width: 24px; height: 24px; flex: none; }
.ic.on { background: #c8c8c8; border: 1px solid #8c8c8c; width: 22px; margin: 0 1px; }
.dd { display: grid; place-items: center; width: 14px; height: 24px; flex: none; }
.bar { flex: none; width: 1px; height: 20px; margin: 0 4px 0 3px; background: #d4d4d4; }
.glyph { display: block; font-family: "DejaVu Sans Condensed", sans-serif; font-size: 15px; line-height: 22px; text-align: center; white-space: nowrap; }
.glyph.small { font-size: 13px; }
.glyph.b { font-weight: bold; font-size: 13px; }
.glyph.it { font: italic 15px/22px "Liberation Serif", serif; }
.glyph.un { text-decoration: underline; font-size: 13px; }
.glyph.st { text-decoration: line-through; font-size: 12px; }
.glyph sup, .glyph sub { font-size: 9px; line-height: 0; color: #2b7bb9; }
.glyph.fx { color: #fff; font-weight: bold; font-size: 16px; -webkit-text-stroke: 1px #2b7bb9; }
.glyph.fc { font-size: 14px; line-height: 18px; background: linear-gradient(#c9211e, #c9211e) center 20px / 16px 4px no-repeat; }
.glyph.pil { font-size: 13px; }
.glyph.pil em { font-style: normal; font-weight: bold; color: #2b7bb9; }
.hl { background: linear-gradient(#fff, #fff) center 20px / 15px 4px no-repeat; }
.shade { color: #b9cfe8; }
.swatch { fill: currentColor; }

.combo { display: flex; flex: none; height: 22px; border: 1px solid #c6c6c6; background: #fff; }
.combo input { flex: 1; min-width: 0; border: 0; padding: 0 1px 0 3px; background: none; outline: 0; font-family: "DejaVu Sans Condensed", sans-serif; font-size: 12px; }
.combo button { width: 10px; display: grid; place-items: center; }
.combo.family { width: 106px; margin-right: 1px; }
.combo.size { width: 46px; margin: 0 2px; }
.combo.size input { text-align: right; }

/* style gallery */
.gallery {
  display: flex;
  height: 60px;
  margin: 3px 9px 0 0;
  padding: 1px;
  overflow: hidden;
  border: 1px solid #d4d4d4;
  border-left: 0;
  background: #fff;
}
.styles .group-label { margin-top: 13px; }
.card { flex: none; display: flex; flex-direction: column; align-items: center; width: 72px; padding-top: 7px; gap: 6px; white-space: nowrap; font-size: 12px; line-height: 18px; color: #555; }
.card .sample { font: 13px/20px "Liberation Sans", "DejaVu Sans Condensed", sans-serif; color: #000; }
.card .heading { color: #2f5496; font-size: 16px; }
.card.picked { border: 3px solid #c0c0c0; outline: 1px solid #8c8c8c; outline-offset: -1px; padding-top: 4px; }

/* document */
.workspace { flex: 1; min-height: 0; display: flex; overflow: hidden; }
.vruler { flex: none; width: 22px; padding-top: 3px; }
.corner { display: grid; place-items: center; width: 16px; height: 16px; margin: 0 6px 6px 0; background: #fff; border: 2px solid #d0d0d0; }
.vscale { display: block; margin-right: 7px; }
.num text { font: 10px "DejaVu Sans Condensed", sans-serif; text-anchor: middle; fill: #444; }
.canvas { flex: 1; min-width: 0; padding-left: 14px; display: flex; flex-direction: column; align-items: center; }
.hruler { display: block; margin: 5px 36px 8px 0; }
.page {
  flex: 1;
  width: 901px;
  padding: 166px 13px 0 131px;
  background: #fff;
  border: 1px solid #c8c8c8;
  border-bottom: 0;
}
.table-wrap { position: relative; }
.schedule {
  width: 100%;
  table-layout: fixed;
  border-collapse: collapse;
  font: 14px/18px "Liberation Sans", "DejaVu Sans Condensed", sans-serif;
  color: #000;
}
.c-time { width: 88px; } .c-d1 { width: 114px; } .c-d2 { width: 108px; }
.c-d3 { width: 107px; } .c-d4 { width: 117px; } .c-d5 { width: 110px; }
.schedule th, .schedule td { padding: 1px 8px 0; text-align: right; vertical-align: top; border: 1px solid #a8c48f; white-space: nowrap; }
.schedule thead th { background: #bdd6ee; color: #fff; padding-top: 0; font-size: 13px; border: 0; border-top: 1px solid #6c9c76; border-bottom: 1px solid #6c9c76; }
.schedule tbody tr { height: 57px; }
.schedule tbody tr.mid { height: 56px; }
.schedule tbody tr.short { height: 44px; }
.schedule tbody th { font-size: 16px; }
.tinted { background: #e2efd9; }
.caret { display: block; width: 1px; height: 17px; background: #000; }
.resize { position: absolute; right: -14px; bottom: -15px; width: 15px; height: 15px; border: 1px solid #8c8c8c; background: #fff; }

/* status bar */
.status {
  flex: none;
  display: flex;
  align-items: center;
  height: 21px;
  padding-right: 8px;
  border-top: 1px solid #c8c8c8;
  background: #f1f1f1;
  color: #555;
  white-space: nowrap;
}
.words { margin-right: 17px; }
.book { margin-right: 18px; }
.lang, .predict { margin-right: 18px; }
.access { display: flex; align-items: center; gap: 3px; margin-right: 20px; }
.views { display: flex; align-items: center; align-self: stretch; margin-right: auto; }
.focus { display: flex; align-items: center; gap: 3px; margin-left: 12px; }
.view { display: grid; place-items: center; width: 40px; align-self: stretch; }
.view.on { background: #d2d2d2; }
.zoom { display: flex; align-items: center; gap: 4px; margin-left: 20px; }
.zoom output { margin-right: 6px; font-family: "DejaVu Sans Condensed", sans-serif; }
.zoom button { width: 12px; font-size: 15px; line-height: 18px; }
.zoom input { appearance: none; width: 100px; height: 14px; margin: 0; background: linear-gradient(#555, #555) center / 100% 1px no-repeat; }
.zoom input::-webkit-slider-thumb { appearance: none; width: 5px; height: 12px; background: #444; }

/* context menu */
.menu {
  position: absolute;
  top: -10px;
  left: 183px;
  width: 224px;
  padding-bottom: 1px;
  background: #fff;
  border: 1px solid #c6c6c6;
  box-shadow: 1px 2px 4px rgba(0, 0, 0, .25);
  color: #333;
}
.menu-head { display: flex; align-items: center; height: 27px; font-size: 12px; font-weight: bold; }
.mi-ic { display: grid; place-items: center; width: 18px; margin: 0 12px 0 8px; }
.paste { display: flex; gap: 8px; height: 32px; align-items: center; padding-right: 36px; }
.menu hr { height: 1px; margin: 1px 34px 1px 0; border: 0; background: #d6d6d6; }
.mi { display: flex; align-items: center; width: 100%; height: 27px; text-align: right; }
.mi u { text-underline-offset: 2px; }
.sub { margin: 0 auto 0 8px; }
.split { width: 1px; height: 12px; margin-right: auto; background: #d4d4d4; }
.split + .sub { margin-right: 8px; }

/* floating format toolbar */
.mini {
  position: absolute;
  top: 403px;
  left: 183px;
  display: flex;
  width: 494px;
  height: 63px;
  background: #fff;
  border: 1px solid #c6c6c6;
  box-shadow: 1px 2px 4px rgba(0, 0, 0, .25);
}
.mini-rows { display: flex; flex-direction: column; gap: 2px; padding: 5px 3px 0; border-left: 1px solid #ddd; width: 240px; }
.mini .ic { width: 22px; }
.mini .dd { width: 15px; }
.mini .combo { height: 24px; margin: 0; }
.mini .combo.family { width: 61px; }
.mini .combo.size { width: 56px; }
.mini .shade { color: #c9d6de; }
.tiles { display: flex; border-left: 1px solid #ddd; }
.tiles.pair { padding-right: 6px; }
.tiles.last { border: 0; padding-right: 4px; }
.tile { display: flex; flex-direction: column; align-items: center; width: 40px; padding-top: 7px; white-space: nowrap; line-height: 13px; color: #333; }
.tile.narrow { width: 30px; }
.tile span { flex: 1; display: grid; place-items: center; }
.tdd { width: 10px; height: 38px; display: grid; place-items: center; }

.pointer { position: absolute; left: 355px; top: 343px; }
```
